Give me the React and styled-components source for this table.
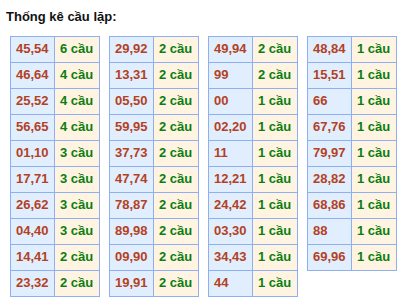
import React from "react";
import styled, { createGlobalStyle } from "styled-components";

const GlobalStyle = createGlobalStyle`
  body {
    margin: 0;
    background: #ffffff;
    font-family: "Liberation Sans", Arial, sans-serif;
  }
`;

const Wrap = styled.div`
  padding: 8px 0 0 6px;
`;

const Title = styled.div`
  font-size: 13px;
  font-weight: bold;
  color: #111111;
  line-height: 18px;
  margin-bottom: 10px;
`;

const Tables = styled.div`
  display: flex;
  align-items: flex-start;
  gap: 9px;
  padding-left: 4px;
`;

const Table = styled.table`
  border-collapse: collapse;
  border: 1px solid #8eaff2;
  width: 90px;
  table-layout: fixed;
`;

const Cell = styled.td`
  border: 1px solid #8eaff2;
  height: 26px;
  padding: 0 0 3px 5px;
  font-size: 13px;
  font-weight: bold;
  white-space: nowrap;
  box-sizing: border-box;
  width: ${(p) => (p.$count ? "45px" : "44px")};
  background: ${(p) => (p.$count ? "#fef4e1" : "#e1eefe")};
  color: ${(p) => (p.$count ? "#0c7d10" : "#b3411f")};
`;

const columns = [
  [
    ["45,54", 6], ["46,64", 4], ["25,52", 4], ["56,65", 4], ["01,10", 3],
    ["17,71", 3], ["26,62", 3], ["04,40", 3], ["14,41", 2], ["23,32", 2],
  ],
  [
    ["29,92", 2], ["13,31", 2], ["05,50", 2], ["59,95", 2], ["37,73", 2],
    ["47,74", 2], ["78,87", 2], ["89,98", 2], ["09,90", 2], ["19,91", 2],
  ],
  [
    ["49,94", 2], ["99", 2], ["00", 1], ["02,20", 1], ["11", 1],
    ["12,21", 1], ["24,42", 1], ["03,30", 1], ["34,43", 1], ["44", 1],
  ],
  [
    ["48,84", 1], ["15,51", 1], ["66", 1], ["67,76", 1], ["79,97", 1],
    ["28,82", 1], ["68,86", 1], ["88", 1], ["69,96", 1],
  ],
];

export default function App() {
  return (
    <Wrap>
      <GlobalStyle />
      <Title>Thống kê cầu lặp:</Title>
      <Tables>
        {columns.map((rows, i) => (
          <Table key={i}>
            <tbody>
              {rows.map(([pair, n]) => (
                <tr key={pair}>
                  <Cell>{pair}</Cell>
                  <Cell $count>{n} cầu</Cell>
                </tr>
              ))}
            </tbody>
          </Table>
        ))}
      </Tables>
    </Wrap>
  );
}
